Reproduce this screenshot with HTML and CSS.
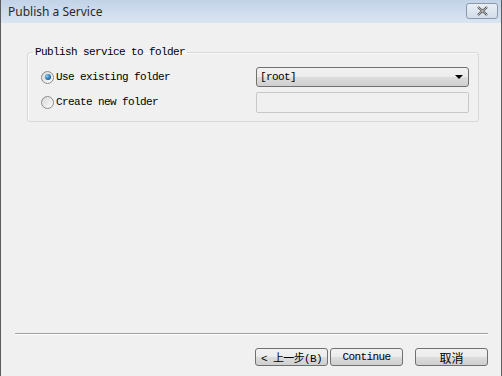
FILE: index.html
```html
<!DOCTYPE html>
<html lang="en">
<head>
    <meta charset="UTF-8">
    <title>Publish a Service</title>
    <link rel="stylesheet" href="styles.css">
</head>
<body>
    <div class="window">
        <div class="titlebar">
            <span class="title">Publish a Service</span>
            <button class="close-button">
                <svg width="13" height="10" viewBox="0 0 13 10">
                    <path d="M2 1 L11 9 M11 1 L2 9" stroke="#3a3a3a" stroke-width="2.2" fill="none"/>
                    <path d="M2 1 L11 9 M11 1 L2 9" stroke="#ffffff" stroke-width="0.8" fill="none"/>
                </svg>
            </button>
        </div>

        <div class="content">
            <fieldset class="group">
                <legend>Publish service to folder</legend>
                <div class="options">
                    <label class="option">
                        <span class="radio checked"></span>
                        Use existing folder
                    </label>
                    <div class="dropdown">
                        <span>[root]</span>
                        <span class="arrow"></span>
                    </div>
                    <label class="option">
                        <span class="radio"></span>
                        Create new folder
                    </label>
                    <div class="textbox"></div>
                </div>
            </fieldset>

            <div class="spacer"></div>

            <div class="separator"></div>
            <div class="buttons">
                <button class="btn">&lt; 上一步(B)</button>
                <button class="btn">Continue</button>
                <button class="btn cancel">取消</button>
            </div>
        </div>
    </div>
</body>
</html>
```

FILE: styles.css
```css
body {
    margin: 0;
    padding: 0;
    font-family: "Liberation Mono", "Noto Sans CJK SC", monospace;
}

.window {
    width: 502px;
    height: 376px;
    box-sizing: border-box;
    border-left: 1px solid #5c5c5c;
    border-right: 1px solid #5c5c5c;
    background-color: #f0f0f0;
    display: flex;
    flex-direction: column;
}

.titlebar {
    height: 23px;
    flex-shrink: 0;
    display: flex;
    align-items: center;
    justify-content: space-between;
    padding: 0 3px 0 7px;
    background-image: linear-gradient(to bottom, #c2d3e8, #dae5f2);
}

.title {
    font-family: "Noto Sans", sans-serif;
    font-size: 12px;
    color: #2b2b2b;
    margin-top: -1px;
}

.close-button {
    width: 32px;
    height: 16px;
    padding: 0;
    margin-top: -2px;
    display: flex;
    align-items: center;
    justify-content: center;
    border: 1px solid #8d99a8;
    border-radius: 3px;
    background-image: linear-gradient(to bottom, #e9eff6, #d3dde9);
}

.content {
    flex: 1;
    display: flex;
    flex-direction: column;
    padding: 23px 0 0 26px;
}

.group {
    width: 452px;
    box-sizing: border-box;
    margin: 0;
    padding: 9px 9px 9px 5px;
    border: 1px solid #d8d8d8;
    border-radius: 3px;
    box-shadow: inset 1px 1px 0 #fafafa;
}

.group legend {
    padding: 0 2px;
    font-size: 11px;
    letter-spacing: -0.6px;
    line-height: 12px;
    color: #000;
}

.options {
    display: grid;
    grid-template-columns: 1fr 213px;
    grid-template-rows: 20px 20px;
    row-gap: 5px;
    align-items: center;
    padding-left: 8px;
}

.option {
    display: flex;
    align-items: center;
    gap: 2px;
    font-size: 11px;
    letter-spacing: -0.6px;
    color: #000;
}

.radio {
    width: 11px;
    height: 11px;
    border: 1px solid #8c8c8c;
    border-radius: 50%;
    background-image: linear-gradient(135deg, #d8d8d8, #fbfbfb);
    display: flex;
    align-items: center;
    justify-content: center;
}

.radio.checked::after {
    content: '';
    width: 6px;
    height: 6px;
    border-radius: 50%;
    background-image: radial-gradient(circle at 35% 35%, #8fd0f4, #1c6ca8 60%, #0f3f6a);
}

.dropdown {
    height: 20px;
    box-sizing: border-box;
    display: flex;
    align-items: center;
    justify-content: space-between;
    padding: 0 5px 0 3px;
    border: 1px solid #707070;
    border-radius: 3px;
    background-image: linear-gradient(to bottom, #f2f2f2 0%, #ebebeb 50%, #dddddd 51%, #cfcfcf 100%);
    font-size: 11px;
    letter-spacing: -0.6px;
}

.dropdown .arrow {
    width: 0;
    height: 0;
    border-left: 4px solid transparent;
    border-right: 4px solid transparent;
    border-top: 4px solid #000;
}

.textbox {
    height: 21px;
    box-sizing: border-box;
    border: 1px solid #c8c8c8;
    border-radius: 2px;
    background-color: #f0f0f0;
}

.spacer {
    flex: 1;
}

.separator {
    height: 1px;
    margin: 0 13px 0 -12px;
    background-color: #a0a0a0;
    border-bottom: 1px solid #ffffff;
}

.buttons {
    display: flex;
    justify-content: flex-end;
    padding: 13px 13px 10px 0;
}

.btn {
    width: 73px;
    height: 18px;
    padding: 0;
    margin-left: 2px;
    border: 1px solid #707070;
    border-radius: 3px;
    background-image: linear-gradient(to bottom, #f2f2f2 0%, #ebebeb 50%, #dddddd 51%, #cfcfcf 100%);
    font-family: "Liberation Mono", "Noto Sans CJK SC", monospace;
    font-size: 11px;
    letter-spacing: -0.6px;
    color: #000;
}

.btn.cancel {
    margin-left: 12px;
    font-size: 12px;
    letter-spacing: 0;
}
```
